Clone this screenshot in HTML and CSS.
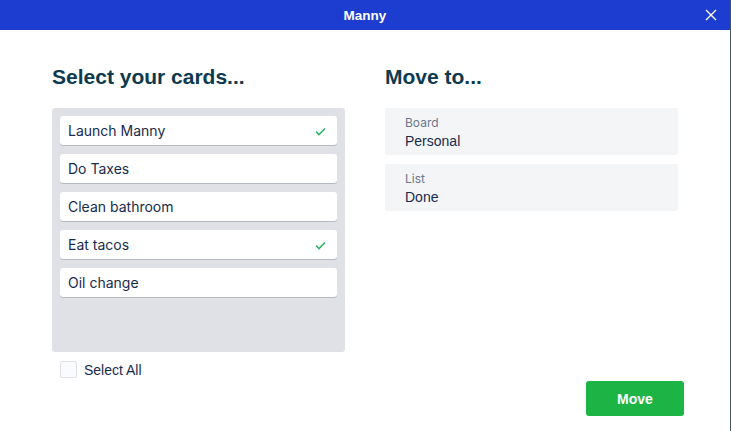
FILE: index.html
```html
<!DOCTYPE html>
<html>
<head>
<meta charset="utf-8">
<link rel="stylesheet" href="styles.css">
</head>
<body>
<div class="window">
  <header class="titlebar">
    <span class="title">Manny</span>
    <svg class="close" width="12" height="12" viewBox="0 0 12 12"><path d="M1 1L11 11M11 1L1 11" stroke="#fff" stroke-width="1.4" fill="none"/></svg>
  </header>
  <main class="content">
    <section class="col">
      <h2 class="heading">Select your cards...</h2>
      <div class="panel">
        <div class="card"><span>Launch Manny</span><svg class="check" width="11" height="9" viewBox="0 0 11 9"><path d="M1 4.5L4 7.5L10 1.5" stroke="#2fb36b" stroke-width="1.6" fill="none"/></svg></div>
        <div class="card"><span>Do Taxes</span></div>
        <div class="card"><span>Clean bathroom</span></div>
        <div class="card"><span>Eat tacos</span><svg class="check" width="11" height="9" viewBox="0 0 11 9"><path d="M1 4.5L4 7.5L10 1.5" stroke="#2fb36b" stroke-width="1.6" fill="none"/></svg></div>
        <div class="card"><span>Oil change</span></div>
      </div>
      <label class="selectall"><span class="box"></span><span>Select All</span></label>
    </section>
    <section class="col">
      <h2 class="heading">Move to...</h2>
      <div class="field"><div class="label">Board</div><div class="value">Personal</div></div>
      <div class="field"><div class="label">List</div><div class="value">Done</div></div>
    </section>
  </main>
  <footer class="footer"><button class="move">Move</button></footer>
</div>
</body>
</html>
```
FILE: styles.css
```css
html, body { margin: 0; padding: 0; }
body { width: 731px; height: 431px; overflow: hidden; background: #fff; font-family: Inter, "Liberation Sans", sans-serif; }
.window { width: 730px; height: 431px; border-right: 1px solid #3b5666; display: flex; flex-direction: column; box-sizing: content-box; }
.titlebar { flex: 0 0 30px; height: 30px; background: #1c3dcf; display: flex; align-items: center; justify-content: center; position: relative; }
.title { color: #fff; font-weight: 700; font-size: 13.5px; font-family: "Liberation Sans", sans-serif; }
.close { position: absolute; right: 13px; top: 9px; }
.content { flex: 0 0 auto; display: flex; gap: 40px; padding: 34px 0 0 52px; }
.col { width: 293px; display: flex; flex-direction: column; }
.heading { margin: 0 0 19px; font-family: "Liberation Sans", sans-serif; font-weight: 700; font-size: 21px; line-height: 25px; color: #0d3a4f; }
.panel { background: #dfe1e6; border-radius: 3px; height: 244px; box-sizing: border-box; padding: 8px 8px; display: flex; flex-direction: column; gap: 9px; }
.card { flex: 0 0 29px; background: #fff; border-radius: 3px; box-shadow: 0 1px 0 #b3b8c2; height: 29px; display: flex; align-items: center; justify-content: space-between; padding: 0 11px 0 8px; font-size: 14px; color: #172b4d; }
.check { margin-top: 1px; }
.selectall { display: flex; align-items: center; gap: 7px; margin: 9px 0 0 8px; font-family: "Liberation Sans", sans-serif; font-size: 14px; color: #172b4d; }
.box { width: 15px; height: 15px; border: 1.5px solid #dfe1e6; border-radius: 2px; background: #fafbfc; }
.field { background: #f4f5f7; border-radius: 3px; height: 47px; box-sizing: border-box; padding: 7px 20px; margin-bottom: 9px; }
.label { font-size: 12px; line-height: 15px; color: #6b778c; }
.value { font-family: "Liberation Sans", sans-serif; font-size: 14px; line-height: 18px; color: #172b4d; margin-top: 2px; }
.footer { display: flex; justify-content: flex-end; padding: 0 46px 0 0; margin-top: auto; margin-bottom: 15px; }
.move { width: 98px; height: 35px; background: #1db446; border: none; border-radius: 3px; color: #fff; font-family: "Liberation Sans", sans-serif; font-weight: 700; font-size: 14px; }
```
